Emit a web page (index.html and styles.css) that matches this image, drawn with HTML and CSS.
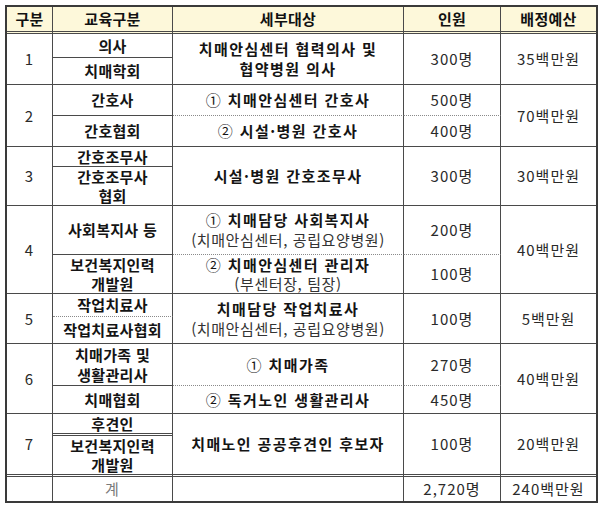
FILE: index.html
```html
<!DOCTYPE html>
<html lang="ko">
<head>
<meta charset="utf-8">
<link rel="stylesheet" href="styles.css">
</head>
<body>
<table class="edu">
  <colgroup>
    <col class="w1"><col class="w2"><col class="w3"><col class="w4"><col class="w5">
  </colgroup>
  <thead>
    <tr class="hd">
      <th>구분</th><th>교육구분</th><th>세부대상</th><th>인원</th><th class="last">배정예산</th>
    </tr>
  </thead>
  <tbody>
    <tr class="h1a">
      <td rowspan="2" class="reg">1</td>
      <td class="b">의사</td>
      <td rowspan="2" class="b tg">치매안심센터 협력의사 및<br>협약병원 의사</td>
      <td rowspan="2" class="reg">300명</td>
      <td rowspan="2" class="reg last">35백만원</td>
    </tr>
    <tr class="h1b"><td class="b">치매학회</td></tr>

    <tr class="h2a">
      <td rowspan="2" class="reg">2</td>
      <td class="b">간호사</td>
      <td class="b tg dot"><span class="circ">①</span> 치매안심센터 간호사</td>
      <td class="reg dot">500명</td>
      <td rowspan="2" class="reg last">70백만원</td>
    </tr>
    <tr class="h2b">
      <td class="b">간호협회</td>
      <td class="b tg"><span class="circ">②</span> 시설·병원 간호사</td>
      <td class="reg">400명</td>
    </tr>

    <tr class="h3a">
      <td rowspan="2" class="reg">3</td>
      <td class="b l19">간호조무사</td>
      <td rowspan="2" class="b tg">시설·병원 간호조무사</td>
      <td rowspan="2" class="reg">300명</td>
      <td rowspan="2" class="reg last">30백만원</td>
    </tr>
    <tr class="h3b"><td class="b l19">간호조무사<br>협회</td></tr>

    <tr class="h4a">
      <td rowspan="2" class="reg">4</td>
      <td class="b">사회복지사 등</td>
      <td class="b tg dot"><span class="circ">①</span> 치매담당 사회복지사<br><span class="sub">(치매안심센터, 공립요양병원)</span></td>
      <td class="reg dot">200명</td>
      <td rowspan="2" class="reg last">40백만원</td>
    </tr>
    <tr class="h4b">
      <td class="b l19">보건복지인력<br>개발원</td>
      <td class="b tg l19"><span class="circ">②</span> 치매안심센터 관리자<br><span class="sub">(부센터장, 팀장)</span></td>
      <td class="reg">100명</td>
    </tr>

    <tr class="h5a">
      <td rowspan="2" class="reg">5</td>
      <td class="b dot">작업치료사</td>
      <td rowspan="2" class="b tg">치매담당 작업치료사<br><span class="sub">(치매안심센터, 공립요양병원)</span></td>
      <td rowspan="2" class="reg">100명</td>
      <td rowspan="2" class="reg last">5백만원</td>
    </tr>
    <tr class="h5b"><td class="b">작업치료사협회</td></tr>

    <tr class="h6a">
      <td rowspan="2" class="reg">6</td>
      <td class="b">치매가족 및<br>생활관리사</td>
      <td class="b tg dot"><span class="circ">①</span> 치매가족</td>
      <td class="reg dot">270명</td>
      <td rowspan="2" class="reg last">40백만원</td>
    </tr>
    <tr class="h6b">
      <td class="b">치매협회</td>
      <td class="b tg"><span class="circ">②</span> 독거노인 생활관리사</td>
      <td class="reg">450명</td>
    </tr>

    <tr class="h7a g7">
      <td rowspan="2" class="reg">7</td>
      <td class="b dbl l19">후견인</td>
      <td rowspan="2" class="b tg">치매노인 공공후견인 후보자</td>
      <td rowspan="2" class="reg">100명</td>
      <td rowspan="2" class="reg last">20백만원</td>
    </tr>
    <tr class="h7b g7"><td class="b l19">보건복지인력<br>개발원</td></tr>

    <tr class="total">
      <td></td>
      <td class="reg gray">계</td>
      <td></td>
      <td class="reg">2,720명</td>
      <td class="reg last">240백만원</td>
    </tr>
  </tbody>
</table>
</body>
</html>
```

FILE: styles.css
```css
html, body {
  margin: 0;
  padding: 0;
  background: #ffffff;
}

body {
  padding: 5px 0 0 5px;
  font-family: "Noto Sans CJK KR", "Noto Sans", sans-serif;
  font-size: 15px;
  color: #1a1a1a;
}

.edu {
  border-collapse: separate;
  border-spacing: 0;
  border: 2px solid #3a3a3a;
  width: 591px;
  table-layout: fixed;
}

.w1 { width: 46px; }
.w2 { width: 120px; }
.w3 { width: 231px; }
.w4 { width: 97px; }
.w5 { width: 95px; }

.edu th,
.edu td {
  padding: 0;
  text-align: center;
  vertical-align: middle;
  line-height: 20px;
  border-right: 1px solid #4a4a4a;
  border-bottom: 1px solid #4a4a4a;
  letter-spacing: 0.3px;
  white-space: nowrap;
}

.edu th {
  background: #fdf8da;
  font-weight: 700;
  color: #111;
  border-bottom: 3px double #4a4a4a;
}

.edu .last { border-right: none; }

.b { font-weight: 700; color: #141414; }
.edu td.reg { font-weight: 400; color: #2a2a2a; letter-spacing: 1px; }
.edu td.tg { letter-spacing: 1.4px; }
.sub { font-weight: 400; color: #333; letter-spacing: 0.6px; }
.circ { font-weight: 400; }
.edu td.gray { color: #7a7a7a; }

.edu td.l19 { line-height: 19px; }

.edu td.dot { border-bottom: 1px dotted #8a8a8a; }
.edu td.dbl { border-bottom: 3px double #4a4a4a; }
.edu .g7 td { border-bottom: none; }
.edu .g7 td.dbl { border-bottom: 3px double #4a4a4a; }
.edu .total td { border-top: 3px double #4a4a4a; border-bottom: none; }

.hd { height: 27px; }
.h1a { height: 24px; }
.h1b { height: 27px; }
.h2a { height: 31px; }
.h2b { height: 31px; }
.h3a { height: 20px; }
.h3b { height: 39px; }
.h4a { height: 49px; }
.h4b { height: 39px; }
.h5a { height: 23px; }
.h5b { height: 27px; }
.h6a { height: 42px; }
.h6b { height: 28px; }
.h7a { height: 22px; }
.h7b { height: 38px; }
.total { height: 27px; }
```
